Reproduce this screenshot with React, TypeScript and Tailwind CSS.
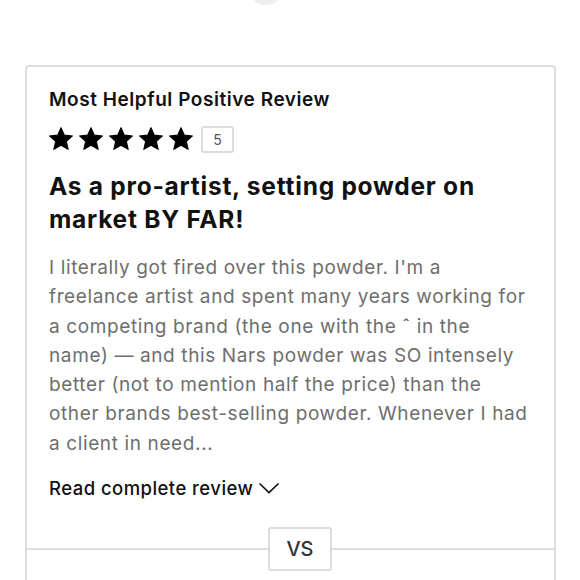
import React from "react";

function Star() {
  return (
    <svg width="24" height="24" viewBox="0.6 0.6 22.8 22.8" aria-hidden="true">
      <path
        d="M12 1.2l3.2 7.1 7.7.8-5.8 5.2 1.7 7.6L12 17.9l-6.8 4 1.7-7.6L1.1 9.1l7.7-.8z"
        fill="#000"
        stroke="#000"
        strokeWidth="1"
        strokeLinejoin="round"
      />
    </svg>
  );
}

const bodyLines = [
  "I literally got fired over this powder. I'm a",
  "freelance artist and spent many years working for",
  "a competing brand (the one with the ˆ in the",
  "name) — and this Nars powder was SO intensely",
  "better (not to mention half the price) than the",
  "other brands best-selling powder. Whenever I had",
  "a client in need...",
];

export default function App() {
  return (
    <div className="w-[580px] h-[580px] overflow-hidden bg-white font-['Inter','Liberation_Sans',sans-serif]">
      <div className="h-[65px] flex">
        <div className="w-[36px] h-[36px] rounded-full bg-[#eeeeee] mt-[-31px] ml-[248px]" />
      </div>
      <div className="ml-[25px] w-[531px] border-2 border-b-0 border-[#dedede] rounded-t-[4px]">
        <div className="pl-[22px] pr-[10px] pt-[21px] pb-[27px]">
          <div className="text-[19px] leading-[24px] font-semibold text-[#111] tracking-[0.55px] whitespace-nowrap">
            Most Helpful Positive Review
          </div>
          <div className="mt-[14px] flex items-center h-[26px]">
            <div className="flex gap-[6px]">
              <Star />
              <Star />
              <Star />
              <Star />
              <Star />
            </div>
            <div className="ml-[8px] w-[33px] h-[27px] border-2 border-[#dcdcdc] rounded-[3px] flex items-center justify-center text-[14px] text-[#555]">
              5
            </div>
          </div>
          <div className="mt-[18px] text-[24.5px] leading-[33px] font-bold text-[#111] tracking-[0.75px] whitespace-nowrap">
            As a pro-artist, setting powder on
            <br />
            market BY FAR!
          </div>
          <p className="mt-[17px] text-[19px] leading-[29.3px] text-[#6e6e6e] tracking-[0.62px] whitespace-nowrap">
            {bodyLines.map((l, i) => (
              <React.Fragment key={i}>
                {l}
                {i < bodyLines.length - 1 && <br />}
              </React.Fragment>
            ))}
          </p>
          <div className="mt-[18px] flex items-center gap-[5px] text-[18.5px] leading-[24px] font-medium text-[#111] tracking-[0.45px]">
            <span>Read complete review</span>
            <svg width="22" height="12" viewBox="0 0 22 12" aria-hidden="true">
              <polyline points="1.5,1.5 11,10.5 20.5,1.5" fill="none" stroke="#111" strokeWidth="1.7" />
            </svg>
          </div>
        </div>
        <div className="flex items-center h-[44px]">
          <div className="w-[241px] h-[2px] bg-[#dedede]" />
          <div className="w-[64px] h-[44px] border-2 border-[#dcdcdc] rounded-[3px] bg-white flex items-center justify-center text-[20px] font-medium text-[#333]">
            VS
          </div>
          <div className="flex-1 h-[2px] bg-[#dedede]" />
        </div>
        <div className="h-[40px]" />
      </div>
    </div>
  );
}
